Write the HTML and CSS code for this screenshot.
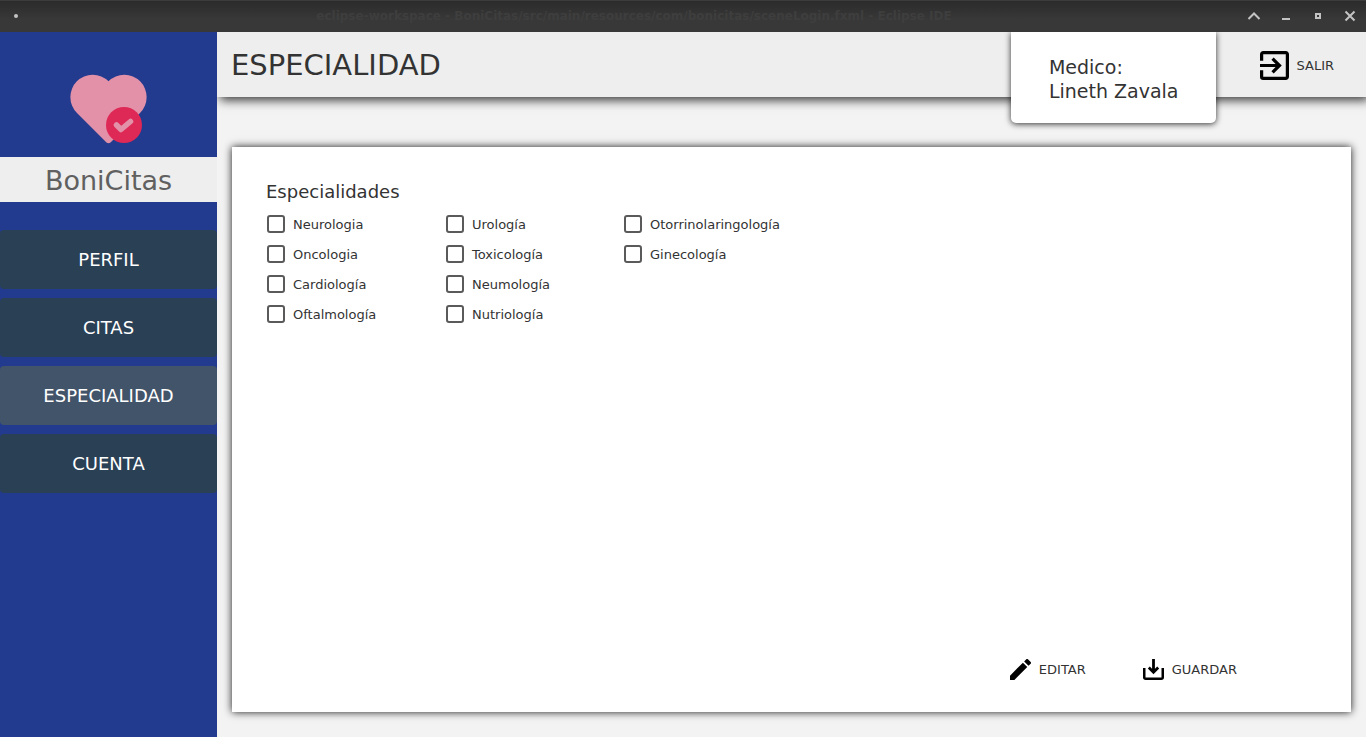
FILE: index.html
```html
<!DOCTYPE html>
<html lang="es">
<head>
<meta charset="utf-8">
<title>BoniCitas</title>
<link rel="stylesheet" href="styles.css">
</head>
<body>
<div class="titlebar">
  <span class="dot"></span>
  <span class="title">eclipse-workspace - BoniCitas/src/main/resources/com/bonicitas/sceneLogin.fxml - Eclipse IDE</span>
  <div class="controls">
    <button type="button" class="control" aria-label="Enrollar"><svg width="16" height="16" viewBox="0 0 16 16"><path d="M2.500 11L8 5.500l5.500 5.500" fill="none" stroke="#c3c3c3" stroke-width="2"/></svg></button>
    <button type="button" class="control" aria-label="Minimizar"><svg width="16" height="16" viewBox="0 0 16 16"><path d="M4 10h8v2H4z" fill="#c3c3c3"/></svg></button>
    <button type="button" class="control" aria-label="Maximizar"><svg width="16" height="16" viewBox="0 0 16 16"><path d="M6 6h4v4H6z" fill="none" stroke="#c3c3c3" stroke-width="2"/></svg></button>
    <button type="button" class="control" aria-label="Cerrar"><svg width="16" height="16" viewBox="0 0 16 16"><path d="M3.500 3.500l9 9M12.500 3.500l-9 9" fill="none" stroke="#c3c3c3" stroke-width="2"/></svg></button>
  </div>
</div>
<div class="app">
  <aside class="sidebar">
    <div class="logo">
      <svg width="77" height="70" viewBox="0 0 77 70">
        <path d="M38.500 7.200A22 22 0 0 1 70 39L40.500 68.500Q38.500 70 36.500 68.500L7 39A22 22 0 0 1 38.500 7.200Z" fill="#e391a9"/>
        <circle cx="54" cy="51" r="18" fill="#de2855"/>
        <path d="M46.500 51l4.500 4.500L60.500 47.500" fill="none" stroke="#e391a9" stroke-width="5.500" stroke-linecap="round" stroke-linejoin="round"/>
      </svg>
    </div>
    <div class="brand">BoniCitas</div>
    <nav class="menu">
      <button type="button" class="item">PERFIL</button>
      <button type="button" class="item">CITAS</button>
      <button type="button" class="item active">ESPECIALIDAD</button>
      <button type="button" class="item">CUENTA</button>
    </nav>
  </aside>
  <main class="main">
    <header class="header">
      <h1 class="heading">ESPECIALIDAD</h1>
      <div class="user">Medico:<br>Lineth Zavala</div>
      <button type="button" class="action exit">
        <svg width="29" height="29" viewBox="3 3 18 18"><path d="M19 3H5c-1.110 0-2 .9-2 2v4h2V5h14v14H5v-4H3v4a2 2 0 0 0 2 2h14c1.100 0 2-.9 2-2V5c0-1.100-.9-2-2-2zm-8.920 12.590L11.500 17l5-5-5-5-1.410 1.410L12.670 11H3v2h9.670z"/></svg>
        SALIR
      </button>
    </header>
    <section class="card">
      <fieldset class="group">
        <legend class="legend">Especialidades</legend>
        <div class="options">
          <label class="option"><input type="checkbox" class="box">Neurologia</label>
          <label class="option"><input type="checkbox" class="box">Oncologia</label>
          <label class="option"><input type="checkbox" class="box">Cardiología</label>
          <label class="option"><input type="checkbox" class="box">Oftalmología</label>
          <label class="option"><input type="checkbox" class="box">Urología</label>
          <label class="option"><input type="checkbox" class="box">Toxicología</label>
          <label class="option"><input type="checkbox" class="box">Neumología</label>
          <label class="option"><input type="checkbox" class="box">Nutriología</label>
          <label class="option"><input type="checkbox" class="box">Otorrinolaringología</label>
          <label class="option"><input type="checkbox" class="box">Ginecología</label>
        </div>
      </fieldset>
      <div class="actions">
        <button type="button" class="action">
          <svg width="21" height="21" viewBox="3 3 18 18"><path d="M20.710 7.040c.39-.39.39-1.040 0-1.410l-2.340-2.340c-.37-.39-1.020-.39-1.410 0l-1.840 1.830 3.750 3.750M3 17.250V21h3.750L17.810 9.930l-3.750-3.750z"/></svg>
          EDITAR
        </button>
        <button type="button" class="action">
          <svg width="21" height="21" viewBox="0 0 21 21" fill="none" stroke="#000" stroke-width="2.500"><path d="M1.250 9v9.250q0 1.500 1.500 1.500h15.500q1.500 0 1.500-1.500V9"/><path d="M10.500 0v13M5.800 8.500l4.700 4.700 4.700-4.700" stroke-width="2.800"/></svg>
          GUARDAR
        </button>
      </div>
    </section>
  </main>
</div>
</body>
</html>
```
FILE: styles.css
```css
* { box-sizing: border-box; }

body {
  margin: 0;
  min-height: 100vh;
  display: flex;
  flex-direction: column;
  font-family: "DejaVu Sans", sans-serif;
  font-size: 13px;
  color: #333;
  background: #f3f3f3;
}

button {
  border: 0;
  padding: 0;
  background: none;
  font: inherit;
  color: inherit;
  cursor: pointer;
}

svg { display: block; flex: none; }

.titlebar {
  position: relative;
  z-index: 1;
  display: grid;
  grid-template-columns: 112px 1fr 112px;
  align-items: center;
  height: 32px;
  padding: 0 8px 1px 14px;
  border-top: 1px solid #3c3c3c;
  background: linear-gradient(#2b2b2b, #383838 60%);
}

.dot {
  width: 4px;
  height: 4px;
  border-radius: 50%;
  background: #c3c3c3;
}

.title {
  overflow: hidden;
  padding-right: 104px;
  white-space: nowrap;
  text-align: center;
  font-size: 12px;
  font-weight: bold;
  color: #3e3e3e;
}

.controls { display: flex; gap: 16px; }

.app { flex: 1; display: flex; }

.sidebar {
  flex: none;
  width: 217px;
  background: #223b8f;
}

.logo {
  display: flex;
  justify-content: center;
  padding: 42px 0 13px;
}

.brand {
  height: 45px;
  line-height: 48px;
  text-align: center;
  font-size: 27px;
  color: #606060;
  background: #eee;
}

.menu {
  display: flex;
  flex-direction: column;
  gap: 9px;
  padding-top: 28px;
}

.item {
  height: 59px;
  border-radius: 4px;
  font-size: 18px;
  color: #fff;
  background: #2a4055;
}

.item.active { background: #425469; }

.main {
  flex: 1;
  display: flex;
  flex-direction: column;
}

.header {
  display: flex;
  align-items: flex-start;
  height: 65px;
  padding: 0 32px 0 14px;
  background: #eee;
  box-shadow: 3px 3px 10px rgba(0, 0, 0, 0.8);
  clip-path: inset(0 0 -40px 0);
}

.heading {
  flex: 1;
  margin: 0;
  line-height: 67px;
  font-size: 29px;
  font-weight: normal;
}

.user {
  margin-right: 44px;
  padding: 23px 37px 20px 38px;
  border-radius: 0 0 5px 5px;
  line-height: 24px;
  font-size: 19px;
  background: #fff;
  box-shadow: 0 1px 6px rgba(0, 0, 0, 0.8);
}

.action {
  display: flex;
  align-items: center;
  gap: 8px;
}

.action.exit { height: 66px; }

.card {
  flex: 1;
  display: flex;
  flex-direction: column;
  margin: 50px 15px 25px;
  padding: 32px 34px;
  background: #fff;
  box-shadow: 0 0 8px rgba(0, 0, 0, 0.9);
}

.group { margin: 0; padding: 0; border: 0; min-width: 0; }

.legend { padding: 0; font-size: 18px; line-height: 26px; }

.options {
  display: grid;
  grid-template-columns: 179px 178px max-content;
  grid-template-rows: repeat(4, 30px);
  grid-auto-flow: column;
  padding: 4px 0 0 1px;
}

.option {
  display: flex;
  align-items: center;
  gap: 8px;
  white-space: nowrap;
}

.box {
  appearance: none;
  flex: none;
  width: 18px;
  height: 18px;
  margin: 0;
  border: 2px solid #5a5a5a;
  border-radius: 3px;
  background: #fff;
}

.box:checked { background: #5a5a5a; }

.actions {
  display: flex;
  justify-content: flex-end;
  gap: 57px;
  margin-top: auto;
  padding-right: 80px;
}
```
